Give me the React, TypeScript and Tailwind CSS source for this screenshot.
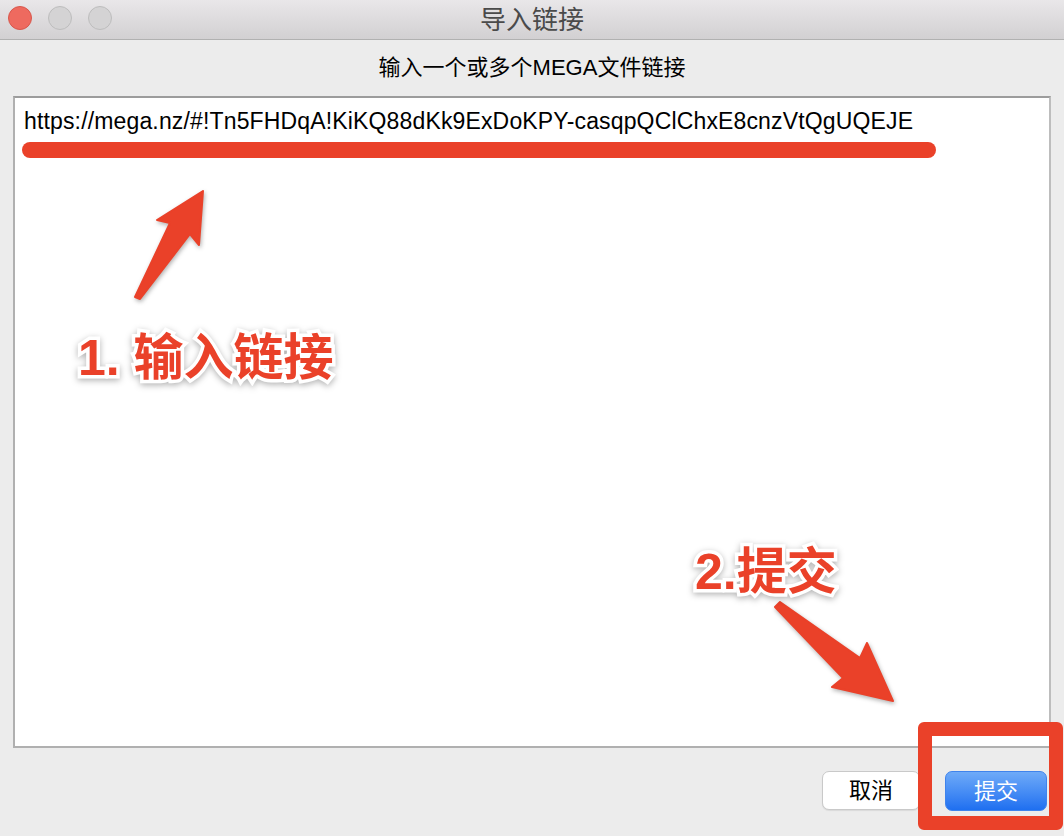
import React from 'react';

const RED = '#ea4129';

const sans = { fontFamily: '"Liberation Sans", "Noto Sans CJK SC", sans-serif' };

const TrafficLights: React.FC = () => (
  <div className="absolute left-[8px] top-[6px] flex gap-[16px]">
    <span className="block h-[24px] w-[24px] rounded-full border border-[#d8574c] bg-[#ee6a5f]" />
    <span className="block h-[24px] w-[24px] rounded-full border border-[#bdbdbd] bg-[#d4d3d4]" />
    <span className="block h-[24px] w-[24px] rounded-full border border-[#bdbdbd] bg-[#d4d3d4]" />
  </div>
);

// flechas rojas de la anotación
const Arrows: React.FC = () => (
  <svg
    className="pointer-events-none absolute inset-0 h-full w-full drop-shadow-[1px_2px_2px_rgba(0,0,0,0.3)]"
    viewBox="0 0 1064 836"
  >
    <polygon
      points="135,297 170,223 157,220 203,191 199,245 190,234 140,299"
      fill={RED}
      stroke={RED}
      strokeWidth={2}
      strokeLinejoin="round"
    />
    <polygon
      points="775,607 843,678 832,687 893,701 867,643 860,658 780,602"
      fill={RED}
      stroke={RED}
      strokeWidth={2}
      strokeLinejoin="round"
    />
  </svg>
);

const Label: React.FC<{ text: string; className: string }> = ({ text, className }) => (
  <div
    className={`pointer-events-none absolute whitespace-pre text-[50px] leading-none font-bold text-[#ea4129] [-webkit-text-stroke:7px_white] [paint-order:stroke_fill] drop-shadow-[0_2px_3px_rgba(0,0,0,0.3)] ${className}`}
    style={sans}
  >
    {text}
  </div>
);

const App: React.FC = () => {
  return (
    <div className="relative flex h-[836px] w-[1064px] flex-col overflow-hidden bg-[#ececec]" style={sans}>
      {/* barra de título */}
      <div className="relative flex h-[40px] shrink-0 items-center justify-center border-b border-[#b1b1b1] bg-gradient-to-b from-[#e9e7e9] to-[#d2d0d2]">
        <TrafficLights />
        <span className="text-[26px] leading-none text-[#4a4a4a]">导入链接</span>
      </div>

      {/* subtítulo */}
      <div className="flex h-[56px] shrink-0 items-center justify-center">
        <span className="text-[22px] leading-none text-black">输入一个或多个MEGA文件链接</span>
      </div>

      {/* área de texto */}
      <div className="mx-[13px] h-[652px] shrink-0 border-2 border-t-[#9c9c9c] border-l-[#b0b0b0] border-r-[#bdbdbd] border-b-[#b0b0b0] bg-white px-[9px] pt-[10px]">
        <div className="text-[23px] leading-[27px] tracking-[0.15px] text-black">
          https://mega.nz/#!Tn5FHDqA!KiKQ88dKk9ExDoKPY-casqpQClChxE8cnzVtQgUQEJE
        </div>
      </div>

      {/* botones */}
      <div className="flex flex-1 items-start justify-end gap-[25px] pr-[17px] pt-[23px]">
        <button className="h-[39px] w-[98px] rounded-[7px] border border-[#c9c9c9] bg-white text-[22px] text-black shadow-[0_1px_1px_rgba(0,0,0,0.08)]">
          取消
        </button>
        <button className="h-[40px] w-[102px] rounded-[7px] border border-[#3f83ec] bg-gradient-to-b from-[#6eaaf8] to-[#1e6ff0] text-[22px] text-white">
          提交
        </button>
      </div>

      {/* anotaciones */}
      <div className="pointer-events-none absolute left-[22px] top-[142px] h-[16px] w-[914px] rounded-full bg-[#ea4129]" />
      <Arrows />
      <Label text="1. 输入链接" className="left-[78px] top-[333px]" />
      <Label text="2.提交" className="left-[695px] top-[547px]" />
      <div className="pointer-events-none absolute left-[918px] top-[722px] h-[108px] w-[145px] rounded-[6px] border-[14px] border-[#ea4129]" />
    </div>
  );
};

export default App;
